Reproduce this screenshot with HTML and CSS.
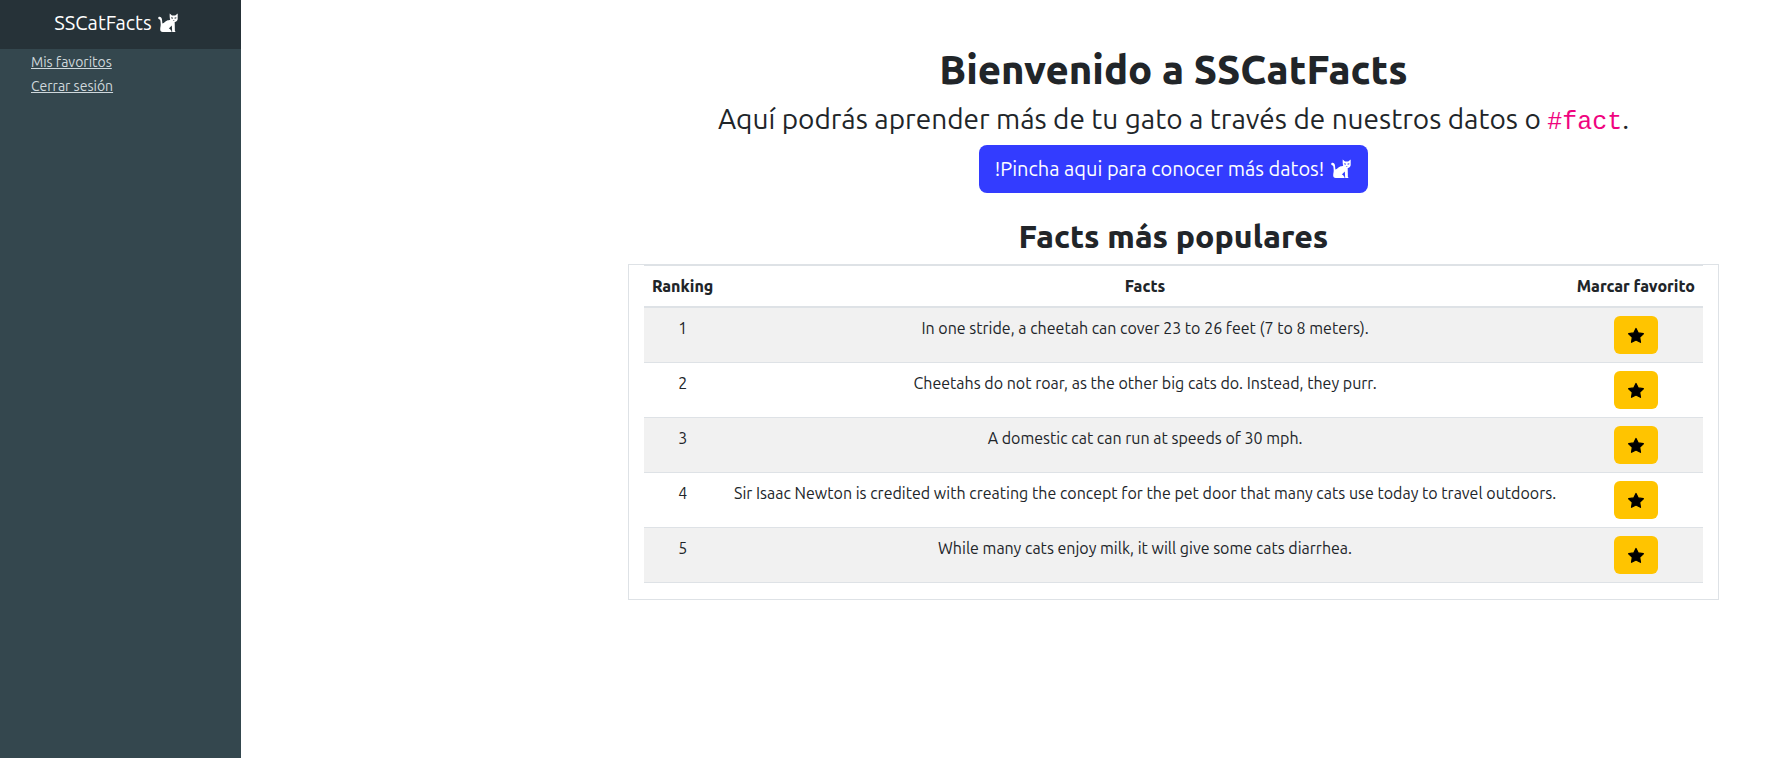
FILE: index.html
```html
<!DOCTYPE html>
<html lang="es">
<head>
<meta charset="utf-8">
<title>SSCatFacts</title>
<link rel="stylesheet" href="styles.css">
</head>
<body>
<svg class="sprite" aria-hidden="true">
  <symbol id="cat" viewBox="0 0 20 20">
    <path d="M11.700.500l2.300 2h3.200L19.700.500v5.400c0 1.500-1.400 2.800-3 3.100l.2 8.900c.4.200.6.600.6 1.100h-3.300l-.4-6.500-3 2.900c1.100.3 1.900.9 2 1.900.6.300.8 1 .8 1.700H4.700c-1.700 0-2.500-1-2.500-2.500 0-2.100.6-3.500.5-5.300-.1-2-.2-3.600-.8-4.600C1.100 6.300.2 5.900.2 4.900c0-1.300 1.700-1.600 2.700-.7C4.300 5.400 4 7.700 4.400 10.400c1-.2 1.700-.8 2.500-1.500 1.200-1.100 2.500-1.600 3.800-1.600.7 0 1.200-.2 1.500-.5-.5-1.600-.6-4.200-.5-6.300z"/>
    <path class="cat-face" d="M13.200 4.200l1.900.5-.4 1-1.500-.5zM18.300 4.200l-1.900.5.400 1 1.500-.5zM14.800 6.900h1.900l-.9.900z"/>
  </symbol>
  <symbol id="star" viewBox="0 0 16 16">
    <path stroke="currentColor" stroke-width="1.200" stroke-linejoin="round" d="M8 1.400l2.100 4.200 4.800.7-3.500 3.300.8 4.800L8 12.200l-4.200 2.200.8-4.800L1.100 6.300l4.800-.7z"/>
  </symbol>
</svg>
<div class="layout">
  <aside class="sidebar">
    <div class="brand">SSCatFacts <svg class="cat"><use href="#cat"/></svg></div>
    <nav class="menu">
      <a href="#favoritos">Mis favoritos</a>
      <a href="#salir">Cerrar sesión</a>
    </nav>
  </aside>
  <main class="content">
    <h1 class="title">Bienvenido a SSCatFacts</h1>
    <p class="lead">Aquí podrás aprender más de tu gato a través de nuestros datos o <code class="tag">#fact</code>.</p>
    <button class="more" type="button">!Pincha aqui para conocer más datos! <svg class="cat"><use href="#cat"/></svg></button>
    <h2 class="subtitle">Facts más populares</h2>
    <div class="panel">
      <table class="facts">
        <thead>
          <tr><th scope="col">Ranking</th><th scope="col" class="fact">Facts</th><th scope="col">Marcar favorito</th></tr>
        </thead>
        <tbody>
          <tr><td>1</td><td>In one stride, a cheetah can cover 23 to 26 feet (7 to 8 meters).</td><td><button class="fav" type="button" aria-label="Marcar favorito 1"><svg class="star"><use href="#star"/></svg></button></td></tr>
          <tr><td>2</td><td>Cheetahs do not roar, as the other big cats do. Instead, they purr.</td><td><button class="fav" type="button" aria-label="Marcar favorito 2"><svg class="star"><use href="#star"/></svg></button></td></tr>
          <tr><td>3</td><td>A domestic cat can run at speeds of 30 mph.</td><td><button class="fav" type="button" aria-label="Marcar favorito 3"><svg class="star"><use href="#star"/></svg></button></td></tr>
          <tr><td>4</td><td>Sir Isaac Newton is credited with creating the concept for the pet door that many cats use today to travel outdoors.</td><td><button class="fav" type="button" aria-label="Marcar favorito 4"><svg class="star"><use href="#star"/></svg></button></td></tr>
          <tr><td>5</td><td>While many cats enjoy milk, it will give some cats diarrhea.</td><td><button class="fav" type="button" aria-label="Marcar favorito 5"><svg class="star"><use href="#star"/></svg></button></td></tr>
        </tbody>
      </table>
    </div>
  </main>
</div>
</body>
</html>
```
FILE: styles.css
```css
* { box-sizing: border-box; }

body {
  margin: 0;
  background: #fff;
  color: #212529;
  font-family: Ubuntu, "Noto Sans", sans-serif;
  font-size: 16px;
  line-height: 24px;
}

button { font: inherit; border: 0; cursor: pointer; }
h1, h2, th { font-weight: 800; }

.sprite { display: block; width: 0; height: 0; }
.layout { display: flex; min-height: 100vh; }

.sidebar {
  flex: 0 0 241px;
  background: #34474e;
  color: #fff;
}

.brand {
  --cat-face: #263238;
  display: flex;
  align-items: center;
  justify-content: center;
  gap: 5px;
  height: 49px;
  padding-bottom: 3px;
  padding-right: 8px;
  background: #263238;
  font-size: 20px;
}

.cat { width: 22px; height: 20px; fill: currentColor; }
.cat-face { fill: var(--cat-face); }

.menu { display: flex; flex-direction: column; align-items: flex-start; padding: 1px 31px; }
.menu a { color: #cfd8dc; font-size: 14px; }

.content {
  flex: 1;
  display: flex;
  flex-direction: column;
  align-items: center;
  padding: 46px 63px 0 387px;
  text-align: center;
}

.title { margin: 0; font-size: 40px; line-height: 48px; }
.lead { margin: 8px 0 0; font-size: 28px; line-height: 34px; }
.tag { color: #f0047f; font-family: "Liberation Mono", monospace; font-size: 25px; line-height: 24px; }

.more {
  --cat-face: #333cff;
  display: flex;
  align-items: center;
  gap: 6px;
  height: 48px;
  margin-top: 9px;
  padding: 0 16px 1px;
  border-radius: 8px;
  background: #333cff;
  color: #fff;
  font-size: 20px;
}

.subtitle { margin: 24px 0 8px; font-size: 32px; line-height: 39px; }

.panel { width: 100%; padding: 0 15px 16px; border: 1px solid #dee2e6; }
.facts { width: 100%; border-collapse: collapse; }
.facts th { padding: 8px; border-top: 1px solid #dee2e6; border-bottom: 2px solid #dee2e6; white-space: nowrap; }
.fact { width: 100%; }
.facts td { padding: 8px; border-bottom: 1px solid #dee2e6; vertical-align: top; }
.facts tbody tr:nth-child(odd) { background: #f1f1f1; }

.fav {
  display: flex;
  align-items: center;
  justify-content: center;
  width: 44px;
  height: 38px;
  margin: 0 auto;
  padding: 0;
  border-radius: 6px;
  background: #ffc400;
  color: #000;
}
.star { width: 18px; height: 17px; fill: currentColor; }
```
